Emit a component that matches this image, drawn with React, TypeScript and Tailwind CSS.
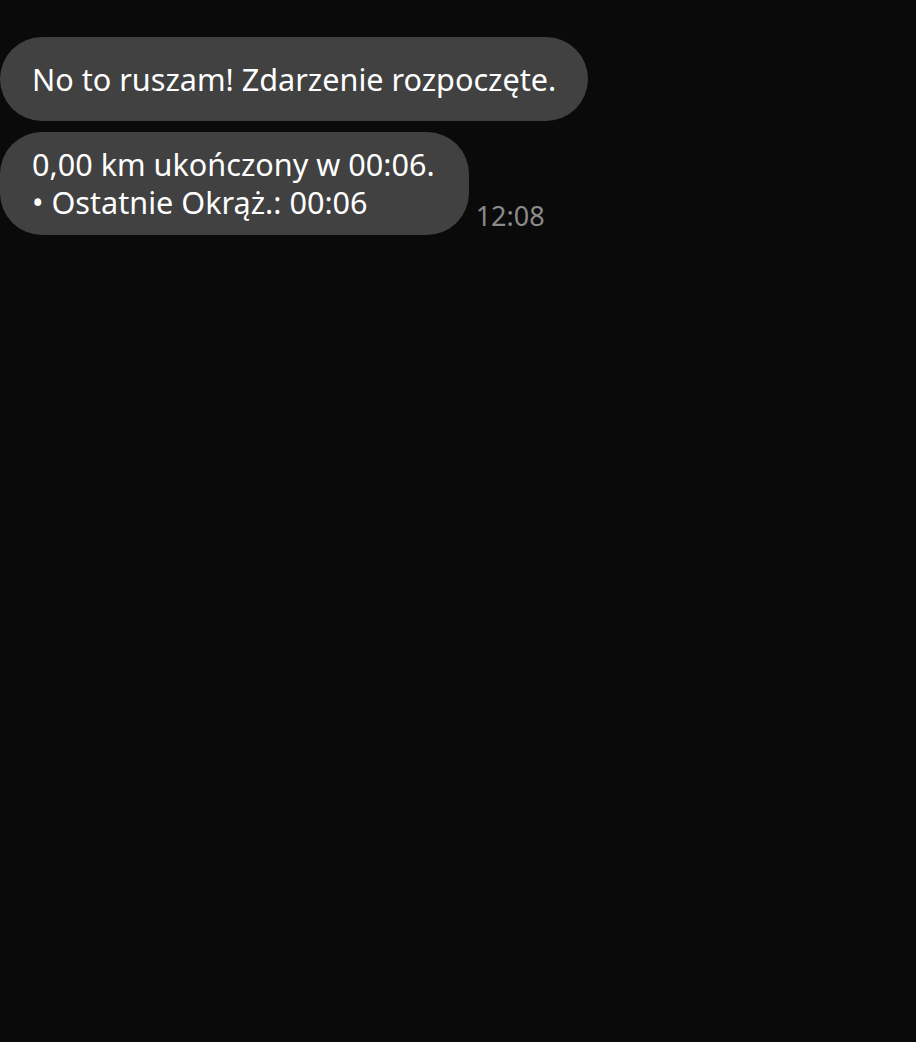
export default function App() {
  return (
    <div
      className="min-h-[1042px] w-full bg-[#0a0a0a] pt-[37px]"
      style={{ fontFamily: '"Noto Sans", "Open Sans", sans-serif' }}
    >
      <div className="flex flex-col items-start gap-[11px]">
        <div className="rounded-[42px] bg-[#414141] px-[32px] py-[22px] text-[30.6px] leading-[40px] text-white">
          No to ruszam! Zdarzenie rozpoczęte.
        </div>
        <div className="flex items-end gap-[7px]">
          <div className="rounded-[42px] bg-[#414141] pl-[32px] pr-[34px] pt-[13px] pb-[14px] text-[30.6px] leading-[38px] text-white">
            <div>0,00 km ukończony w 00:06.</div>
            <div>• Ostatnie Okrąż.: 00:06</div>
          </div>
          <span className="mb-[3px] text-[27px] leading-[32px] text-[#8a8a8a]">12:08</span>
        </div>
      </div>
    </div>
  );
}
